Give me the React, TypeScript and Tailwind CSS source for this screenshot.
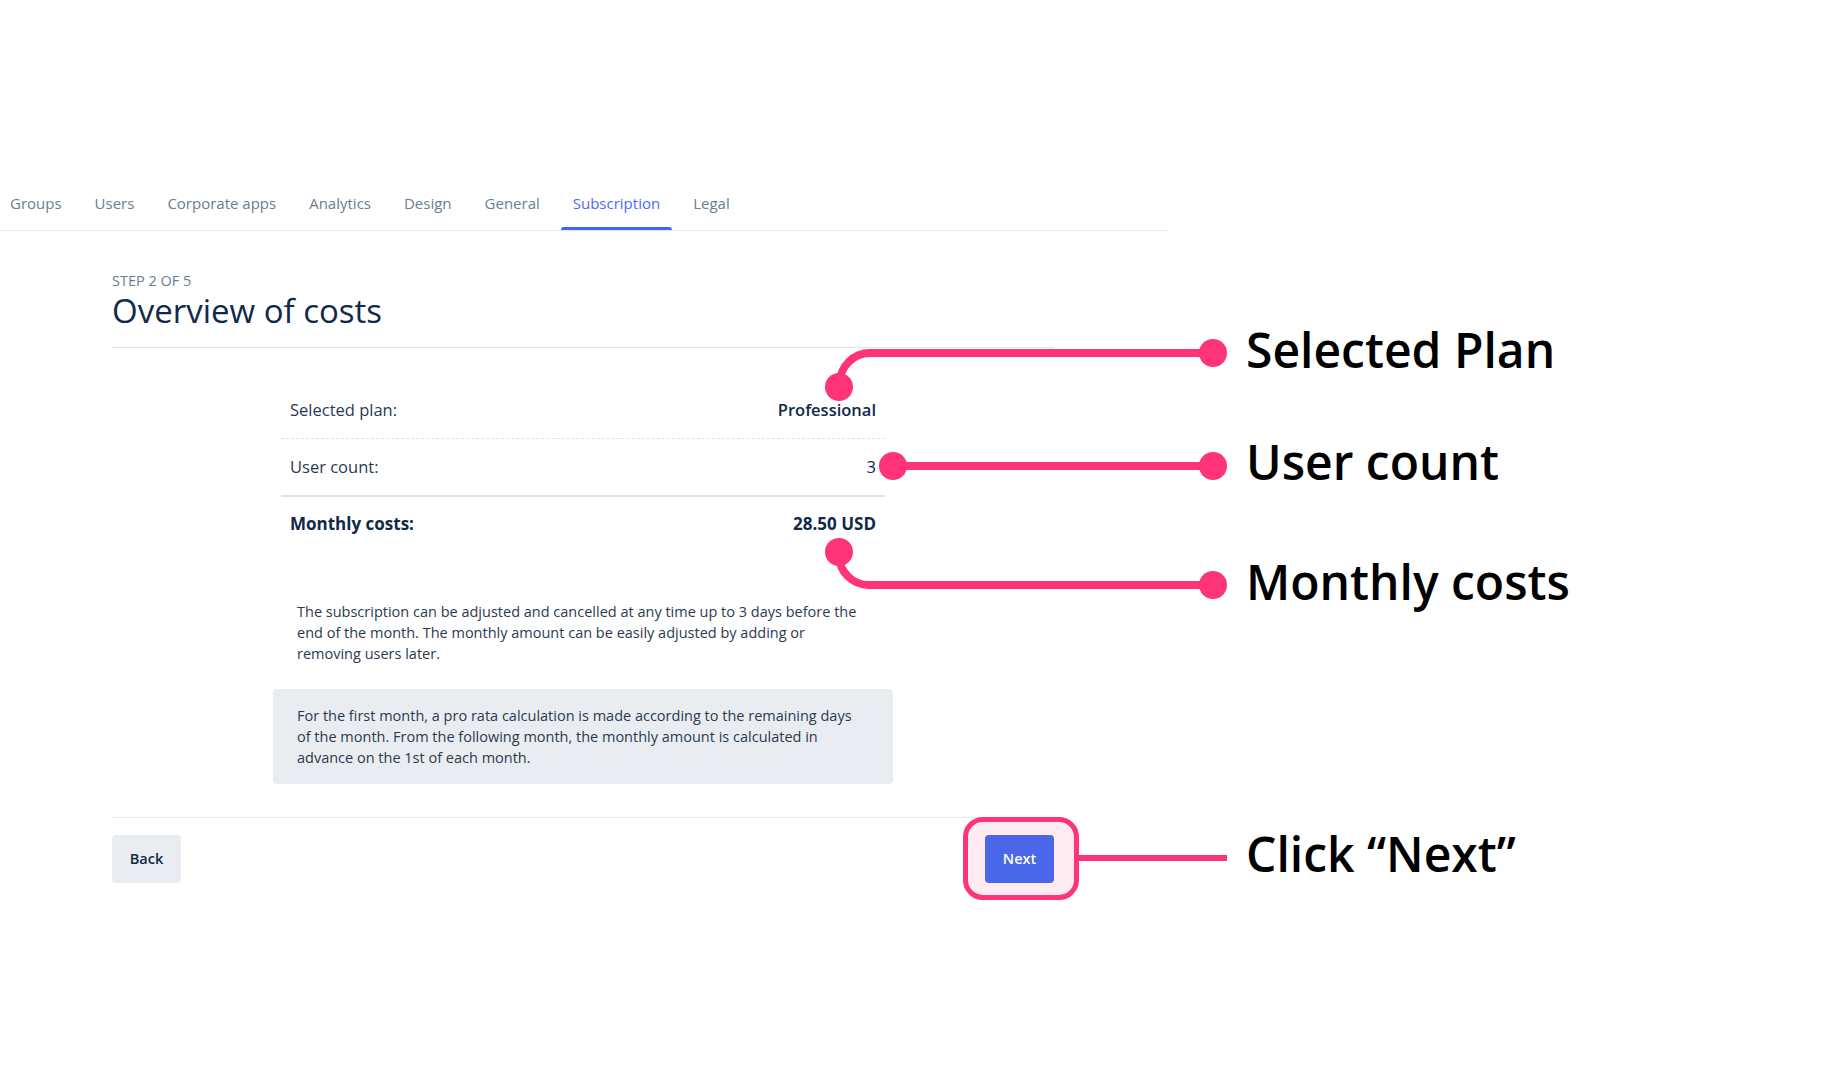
const tabs = ['Groups', 'Users', 'Corporate apps', 'Analytics', 'Design', 'General', 'Subscription', 'Legal'];

const PINK = '#ff3478';

function Tabs() {
  return (
    <nav className="mt-[180px] flex w-[1168px] gap-[9px] border-b border-[#e6e9ee] pl-0">
      {tabs.map((t, i) => {
        const active = t === 'Subscription';
        return (
          <div
            key={t}
            className={
              'relative px-3 pt-[13px] pb-[17px] text-[15px] leading-5 ' +
              (i === 0 ? '-ml-[2px] ' : '') +
              (active ? 'text-[#4a6cf2]' : 'text-[#6b7c93]')
            }
          >
            {t}
            {active && <span className="absolute bottom-0 left-0 right-0 h-[3px] rounded-t-[3px] bg-[#3f66f1]" />}
          </div>
        );
      })}
    </nav>
  );
}

function Annotations() {
  return (
    <>
      <svg className="pointer-events-none absolute left-0 top-0" width={1831} height={1081}>
        <g fill="none" stroke={PINK} strokeWidth={8} strokeLinecap="round">
          <path d="M 1213 353 H 870 A 30 30 0 0 0 840 383 V 386" />
          <path d="M 893 466 H 1213" />
          <path d="M 839 552 V 555 A 30 30 0 0 0 869 585 H 1213" />
        </g>
        <path d="M 1078 858 H 1227" stroke={PINK} strokeWidth={6} />
        <g fill={PINK}>
          <circle cx={1213} cy={353} r={14} />
          <circle cx={839} cy={387} r={14} />
          <circle cx={893} cy={466} r={14} />
          <circle cx={1213} cy={466} r={14} />
          <circle cx={839} cy={552} r={14} />
          <circle cx={1213} cy={585} r={14} />
        </g>
      </svg>
      <div className="absolute left-[1246px] top-[326px] text-[48px] font-semibold leading-none text-black">Selected Plan</div>
      <div className="absolute left-[1246px] top-[438px] text-[48px] font-semibold leading-none text-black">User count</div>
      <div className="absolute left-[1246px] top-[558px] text-[48px] font-semibold leading-none text-black">Monthly costs</div>
      <div className="absolute left-[1246px] top-[830px] text-[48px] font-semibold leading-none text-black">Click “Next”</div>
    </>
  );
}

export default function App() {
  return (
    <div className="relative h-[1081px] w-[1831px] overflow-hidden bg-white font-['Open_Sans',sans-serif]">
      <Tabs />

      <main className="ml-[112px] w-[942px]">
        {/* Header */}
        <div className="border-b border-[#e2e6eb] pt-[42px] pb-[18px]">
          <div className="text-[14.5px] uppercase leading-4 text-[#6b7c93]">Step 2 of 5</div>
          <h1 className="mt-1 text-[33px] leading-9 text-[#11294b]">Overview of costs</h1>
        </div>

        {/* Summary */}
        <div className="mx-auto mt-[34px] w-[604px] text-[16.5px]">
          <div className="flex h-[57px] items-center justify-between border-b border-dashed border-[#dde2e8] px-[9px]">
            <span className="text-[#2a3a52]">Selected plan:</span>
            <span className="font-semibold text-[#10294a]">Professional</span>
          </div>
          <div className="flex h-[58px] items-center justify-between border-b-2 border-[#dfe3e8] px-[9px]">
            <span className="text-[#2a3a52]">User count:</span>
            <span className="text-[#10294a]">3</span>
          </div>
          <div className="flex h-[54px] items-center justify-between px-[9px] text-[17px] font-bold text-[#10294a]">
            <span>Monthly costs:</span>
            <span>28.50 USD</span>
          </div>
        </div>

        <div className="mx-auto mt-[50px] w-[620px] text-[14.5px] leading-[21px] text-[#2b3a50]">
          <p className="px-6">
            The subscription can be adjusted and cancelled at any time up to 3 days before the end of the month. The
            monthly amount can be easily adjusted by adding or removing users later.
          </p>
          <div className="mt-[25px] rounded-[4px] bg-[#e9edf1] py-4 pl-6 pr-[30px]">
            For the first month, a pro rata calculation is made according to the remaining days of the month. From the
            following month, the monthly amount is calculated in advance on the 1st of each month.
          </div>
        </div>

        {/* Footer */}
        <div className="mt-[33px] flex items-start justify-between border-t border-[#e6e9ee] pt-[17px]">
          <button className="h-12 w-[69px] rounded-[4px] bg-[#e9edf1] text-[14.5px] font-semibold text-[#10294a]">
            Back
          </button>
          <div className="relative">
            <div className="absolute left-[-22px] top-[-18px] h-[83px] w-[116px] rounded-[20px] border-[5px] border-[#ff3478] bg-[#ffebf2]" />
            <button className="relative h-12 w-[69px] rounded-[4px] bg-[#4a66e9] text-[14.5px] font-semibold text-white">
              Next
            </button>
          </div>
        </div>
      </main>

      <Annotations />
    </div>
  );
}
